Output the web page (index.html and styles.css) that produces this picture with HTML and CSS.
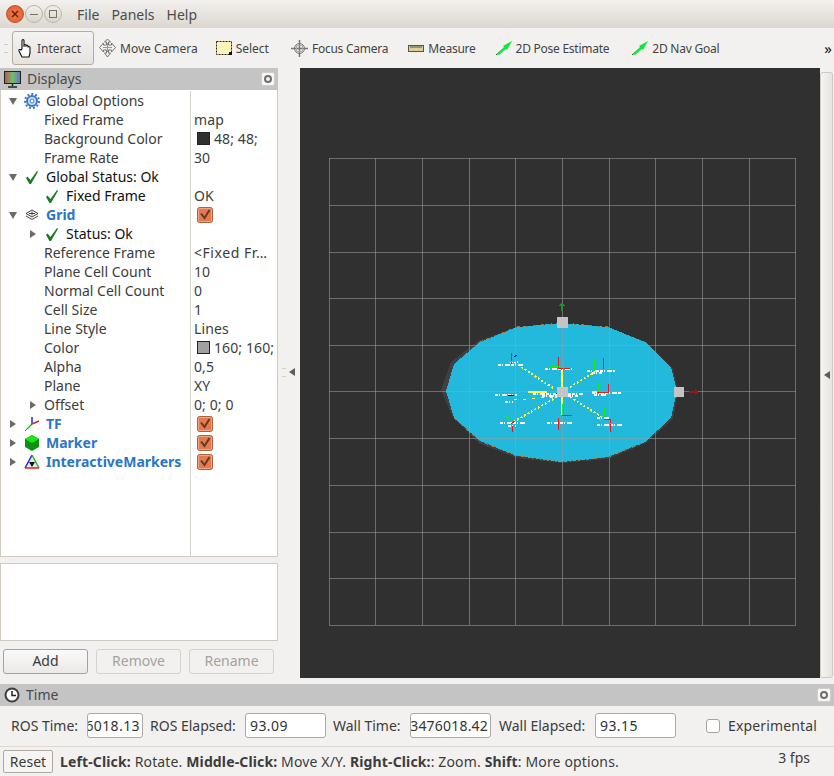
FILE: index.html

```html
<!DOCTYPE html>
<html lang="en">
<head>
    <meta charset="UTF-8">
    <title>RViz</title>
    <link rel="stylesheet" href="styles.css">
</head>
<body>
    <svg class="sprite" width="0" height="0">
        <symbol id="check" viewBox="0 0 16 16">
            <path d="M2 9l1.500-1.500 3 3.500 6.500-9 1 .8-7 12.200h-1.500z" fill="#1b7a24"/>
        </symbol>
        <symbol id="box" viewBox="0 0 16 16">
            <rect x="0.500" y="0.500" width="15" height="15" rx="2" fill="#e67a4e" stroke="#a9623f"/>
            <rect x="1.500" y="1.500" width="13" height="13" rx="1" fill="none" stroke="#f2a484"/>
            <path d="M4 6.500l3.500 4.500 5-8" fill="none" stroke="#5e3a2c" stroke-width="2"/>
        </symbol>
        <symbol id="arrowdown" viewBox="0 0 10 10">
            <path d="M1 2h8l-4 7z" fill="#6b6b6b"/>
        </symbol>
        <symbol id="arrowright" viewBox="0 0 10 10">
            <path d="M2 1v8l6-4z" fill="#6b6b6b"/>
        </symbol>
        <symbol id="pose" viewBox="0 0 16 16">
            <path d="M0 15L12 5" stroke="#0a5a0a" stroke-width="1"/>
            <path d="M1 14l7-7-1-1 9-5-5 9-1-1-7 6z" fill="#10e840"/>
        </symbol>
        <symbol id="float" viewBox="0 0 14 14">
            <rect x="0.500" y="0.500" width="13" height="13" rx="2" fill="#f7f6f4" stroke="#d0ccc6"/>
            <circle cx="7" cy="7" r="3" fill="none" stroke="#6e6e6e" stroke-width="2"/>
        </symbol>
    </svg>

    <div class="titlebar">
        <div class="winbtn close"><svg width="8" height="8" viewBox="0 0 8 8"><path d="M1 1l6 6M7 1l-6 6" stroke="#5c2410" stroke-width="1.500"/></svg></div>
        <div class="winbtn"><span class="min-mark"></span></div>
        <div class="winbtn"><span class="max-mark"></span></div>
        <div class="menu">
            <span>File</span>
            <span>Panels</span>
            <span>Help</span>
        </div>
    </div>

    <div class="toolbar">
        <div class="grip"></div>
        <div class="tool active">
            <svg width="18" height="20" viewBox="0 0 18 20"><path d="M5 11V2.500a1 1 0 0 1 2 0V9V7.500a1 1 0 0 1 2 0V9V8a1 1 0 0 1 2 0v1.500a1 1 0 0 1 2 0V15l-1 4H5l-3-6c-.6-1.500 1-2 2-1z" fill="#fff" stroke="#111" stroke-width="1.100"/></svg>
            <span>Interact</span>
        </div>
        <div class="tool move">
            <svg width="17" height="18" viewBox="0 0 17 18"><path d="M8.500 0l3 3h-2v3h3V4l4 4.500-4 4.500v-2h-3v3h2l-3 4-3-4h2v-3h-3v2L.5 8.500l4-4.500v2h3V3h-2z" fill="#eee" stroke="#777"/><path d="M4 8.500h9M8.500 4v9" stroke="#999"/></svg>
            <span>Move Camera</span>
        </div>
        <div class="tool select">
            <svg width="16" height="14" viewBox="0 0 16 14"><rect x="0.500" y="0.500" width="15" height="13" fill="#fbf6b8" stroke="#222" stroke-dasharray="2 1"/><rect x="13" y="11" width="3" height="3" fill="#111"/></svg>
            <span>Select</span>
        </div>
        <div class="tool focus tight">
            <svg width="17" height="17" viewBox="0 0 17 17"><circle cx="8.500" cy="8.500" r="5" fill="#eee" stroke="#777"/><path d="M8.500 0v17M0 8.500h17" stroke="#777" stroke-width="1.500"/><path d="M5.500 5.500h6v6h-6z" fill="none" stroke="#aaa"/></svg>
            <span>Focus Camera</span>
        </div>
        <div class="tool measure tight">
            <svg width="16" height="7" viewBox="0 0 16 7"><rect x="0.500" y="0.500" width="15" height="6" fill="#dccf98" stroke="#555"/><path d="M3 1v2M5 1v2M7 1v2M9 1v2M11 1v2M13 1v2" stroke="#555"/></svg>
            <span>Measure</span>
        </div>
        <div class="tool pose tight">
            <svg width="16" height="16"><use href="#pose"/></svg>
            <span>2D Pose Estimate</span>
        </div>
        <div class="tool nav tight">
            <svg width="16" height="16"><use href="#pose"/></svg>
            <span>2D Nav Goal</span>
        </div>
        <div class="more">»</div>
    </div>

    <div class="main">
        <div class="leftside">
            <div class="dockhead">
                <svg class="dockicon" width="17" height="17" viewBox="0 0 17 17">
                    <defs><linearGradient id="screen"><stop offset="0" stop-color="#c0504d"/><stop offset="0.500" stop-color="#6fbf6a"/><stop offset="1" stop-color="#6a6fc8"/></linearGradient></defs>
                    <rect x="0.500" y="0.500" width="16" height="12" fill="url(#screen)" stroke="#222"/>
                    <path d="M8.500 13v2M4 16h9" stroke="#222" stroke-width="1.500"/>
                </svg>
                <span class="docktitle">Displays</span>
                <svg class="floatbtn" width="14" height="14"><use href="#float"/></svg>
            </div>

            <div class="tree">
                <div class="row"><div class="name lvl0"><svg class="arrow" width="10" height="10"><use href="#arrowdown"/></svg>
                    <svg class="ico" width="16" height="16" viewBox="0 0 16 16"><circle cx="8" cy="8" r="5" fill="#cfe0f6" stroke="#3b78c9" stroke-width="2"/><circle cx="8" cy="8" r="7" fill="none" stroke="#3b78c9" stroke-width="2" stroke-dasharray="2 2"/><circle cx="8" cy="8" r="2" fill="#fff" stroke="#3b78c9"/></svg>
                    <span>Global Options</span></div><div class="val"></div></div>
                <div class="row"><div class="name plain">Fixed Frame</div><div class="val">map</div></div>
                <div class="row"><div class="name plain">Background Color</div><div class="val"><span class="swatch dark"></span>48; 48;</div></div>
                <div class="row"><div class="name plain">Frame Rate</div><div class="val">30</div></div>
                <div class="row"><div class="name lvl0"><svg class="arrow" width="10" height="10"><use href="#arrowdown"/></svg>
                    <svg class="ico" width="16" height="16"><use href="#check"/></svg>
                    <span class="black">Global Status: Ok</span></div><div class="val"></div></div>
                <div class="row"><div class="name lvl1"><svg class="ico" width="16" height="16"><use href="#check"/></svg>
                    <span class="black">Fixed Frame</span></div><div class="val">OK</div></div>
                <div class="row"><div class="name lvl0"><svg class="arrow" width="10" height="10"><use href="#arrowdown"/></svg>
                    <svg class="ico" width="16" height="16" viewBox="0 0 16 16"><path d="M8 3l6 3.500-6 3.500-6-3.500zM2 9l6 3.500L14 9M5 6.500l6 0M8 4.500v4" fill="none" stroke="#444"/></svg>
                    <span class="blue">Grid</span></div><div class="val"><svg class="cbox" width="16" height="16"><use href="#box"/></svg></div></div>
                <div class="row"><div class="name lvl1"><svg class="arrow sub" width="10" height="10"><use href="#arrowright"/></svg>
                    <svg class="ico" width="16" height="16"><use href="#check"/></svg>
                    <span class="black">Status: Ok</span></div><div class="val"></div></div>
                <div class="row"><div class="name plain">Reference Frame</div><div class="val longval">&lt;Fixed Fr…</div></div>
                <div class="row"><div class="name plain">Plane Cell Count</div><div class="val">10</div></div>
                <div class="row"><div class="name plain">Normal Cell Count</div><div class="val">0</div></div>
                <div class="row"><div class="name plain">Cell Size</div><div class="val">1</div></div>
                <div class="row"><div class="name plain">Line Style</div><div class="val">Lines</div></div>
                <div class="row"><div class="name plain">Color</div><div class="val"><span class="swatch gray"></span>160; 160;</div></div>
                <div class="row"><div class="name plain">Alpha</div><div class="val">0,5</div></div>
                <div class="row"><div class="name plain">Plane</div><div class="val">XY</div></div>
                <div class="row"><div class="name plain offset"><svg class="arrow" width="10" height="10"><use href="#arrowright"/></svg><span>Offset</span></div><div class="val">0; 0; 0</div></div>
                <div class="row"><div class="name lvl0"><svg class="arrow" width="10" height="10"><use href="#arrowright"/></svg>
                    <svg class="ico" width="16" height="16" viewBox="0 0 16 16"><path d="M8 8V1" stroke="#2222dd" stroke-width="1.500"/><path d="M8 8l7-3" stroke="#dd2222" stroke-width="1.500"/><path d="M8 8l-5 5" stroke="#22cc22" stroke-width="1.500"/><path d="M1 15l7-7" stroke="#dd2222" stroke-width="1" stroke-dasharray="3 5"/></svg>
                    <span class="blue">TF</span></div><div class="val"><svg class="cbox" width="16" height="16"><use href="#box"/></svg></div></div>
                <div class="row"><div class="name lvl0"><svg class="arrow" width="10" height="10"><use href="#arrowright"/></svg>
                    <svg class="ico" width="16" height="16" viewBox="0 0 16 16"><path d="M8 0l7 4v8l-7 4-7-4V4z" fill="#0f8f0f"/><path d="M8 0l7 4-7 4-7-4z" fill="#19e619"/></svg>
                    <span class="blue">Marker</span></div><div class="val"><svg class="cbox" width="16" height="16"><use href="#box"/></svg></div></div>
                <div class="row"><div class="name lvl0"><svg class="arrow" width="10" height="10"><use href="#arrowright"/></svg>
                    <svg class="ico" width="16" height="16" viewBox="0 0 16 16"><path d="M8 1l7 13H1z" fill="#e8e8e8"/><path d="M8 1L1 14" stroke="#2222dd" stroke-width="1.500"/><path d="M8 1l7 13" stroke="#22bb22" stroke-width="1.500"/><path d="M1 14h14" stroke="#dd2222" stroke-width="1.500"/><path d="M5 8h6l-3 5z" fill="#111"/></svg>
                    <span class="blue">InteractiveMarkers</span></div><div class="val"><svg class="cbox" width="16" height="16"><use href="#box"/></svg></div></div>
                <div class="rest"></div>
            </div>

            <div class="desc"></div>

            <div class="btnrow">
                <div class="btn">Add</div>
                <div class="btn off">Remove</div>
                <div class="btn off">Rename</div>
            </div>
        </div>

        <div class="split">
            <span class="splitgrip"></span>
            <span class="splitarrow"></span>
        </div>

        <div class="view">
            <svg class="scene" width="520" height="610" viewBox="300 68 520 610">
                <rect x="300" y="68" width="520" height="610" fill="#303030"/>
                <!-- shadow of the disc -->
                <path d="M441 390l10-28 27-21 39-14 45-4 46 4 38 15 27 27 5 22-5 28-27 24-38 16-46 4-45-5-39-15-26-27z" fill="#404040"/>
                <path d="M446 391l8-27 26-22 37-15 45-4 46 4 37 15 26 25 6 24-6 27-26 24-37 15-46 5-45-6-37-15-26-23z" fill="#22b9dc"/>
                <path d="M454 418l26 23 37 15 45 6 46-5 37-15M480 342l37-15 45-4 46 4" fill="none" stroke="#9a7a2c" stroke-width="1" stroke-dasharray="3 5"/>
                <g class="gridlines">
                    <path d="M329.500 158v467M375.500 158v467M422.500 158v467M469.500 158v467M515.500 158v467M562.500 158v467M609.500 158v467M655.500 158v467M702.500 158v467M749.500 158v467M795.500 158v467"/>
                    <path d="M329 158.500h467M329 205.500h467M329 252.500h467M329 298.500h467M329 345.500h467M329 391.500h467M329 438.500h467M329 485.500h467M329 532.500h467M329 578.500h467M329 625.500h467"/>
                </g>
                <!-- dashed links -->
                <g class="links">
                    <path d="M553 388L515 363"/>
                    <path d="M570 387L595 372"/>
                    <path d="M557 397L513 422"/>
                    <path d="M570 397L602 417"/>
                </g>
                <path class="sparse" d="M553 397L513 400"/>
                <path d="M562 370v17M562 397v18" stroke="#ffff40" stroke-width="2"/>
                <path d="M528 392h19M592 392h5" stroke="#ffff40" stroke-width="2"/>
                <!-- white scans -->
                <g class="scans">
                    <path d="M533 394h50"/>
                    <path d="M542 396h36"/>
                    <path d="M498 365h25M510 362h8M545 369h27M587 371h28M592 373h10"/>
                    <path d="M495 395h22M505 402h8M592 393h30M594 395h12"/>
                    <path d="M500 423h25M508 426h8M547 423h25M597 425h25M597 418h12"/>
                </g>
                <!-- frames -->
                <path d="M558 357v11M511 353v11M603 358v11M608 384v9M558 418v12M512 426v6M610 420v12M558 368h12M597 392h11M562 415h10M604 419h7M511 424l4-3" stroke="#ff1010" stroke-width="1" fill="none"/>
                <path d="M563 359v10M594 360v11M598 383v9M562 404v11M507 361h10M550 366h9M595 367h7M510 421l-4-5M569 421h-8M604 423h7M604 408v9" stroke="#10f010" stroke-width="1" fill="none"/>
                <path d="M514 357l3-2M508 395h6M556 393h3M562 391h2" stroke="#1010ee" stroke-width="1" fill="none"/>
                <!-- controls -->
                <rect x="557" y="317" width="11" height="11" fill="#c4c4c4"/>
                <rect x="674" y="387" width="10" height="10" fill="#c4c4c4"/>
                <rect x="557" y="387" width="11" height="10" fill="#c4c4c4"/>
                <path d="M562 302l-3 4h2v5h2v-5h2z" fill="#1f8f3a"/>
                <path d="M699 392l-4-3v2h-6v2h6v2z" fill="#a01414"/>
            </svg>
        </div>

        <div class="rightside">
            <span class="splitarrow"></span>
        </div>
    </div>

    <div class="dockhead timehead">
        <svg class="dockicon" width="16" height="16" viewBox="0 0 16 16"><circle cx="8" cy="8" r="6.500" fill="#fafafa" stroke="#3d3d3d" stroke-width="2"/><path d="M8 4v4.500h4" fill="none" stroke="#222" stroke-width="1.500"/></svg>
        <span class="docktitle">Time</span>
        <svg class="floatbtn" width="14" height="14"><use href="#float"/></svg>
    </div>

    <div class="timerow">
        <span class="tlabel t1">ROS Time:</span>
        <div class="field f1"><span>3476018.13</span></div>
        <span class="tlabel t2">ROS Elapsed:</span>
        <div class="field wide"><span>93.09</span></div>
        <span class="tlabel t3">Wall Time:</span>
        <div class="field wide clip"><span>3476018.42</span></div>
        <span class="tlabel t4">Wall Elapsed:</span>
        <div class="field wide"><span>93.15</span></div>
        <span class="plaincheck"></span>
        <span class="tlabel exp">Experimental</span>
    </div>

    <div class="statusbar">
        <div class="reset">Reset</div>
        <div class="hint"><b>Left-Click:</b> Rotate. <b>Middle-Click:</b> Move X/Y. <b>Right-Click:</b>: Zoom. <b>Shift</b>: More options.</div>
        <div class="fps">3 fps</div>
    </div>
</body>
</html>
```

FILE: styles.css

```css
* { box-sizing: border-box; }
html, body { margin: 0; padding: 0; }
body { width: 834px; height: 776px; overflow: hidden; display: flex; flex-direction: column; background-color: #f2f1ef; color: #3c3c3c; font-family: "Noto Sans", sans-serif; font-size: 14px; line-height: 19px; }
.sprite { position: absolute; }
svg { display: block; flex: none; }

.titlebar { height: 28px; flex: none; display: flex; align-items: center; padding-left: 6px; gap: 1px; background: linear-gradient(#f3f1ee, #dcd7d0); border-radius: 6px 6px 0 0; }
.winbtn { width: 18px; height: 18px; border-radius: 50%; display: flex; align-items: center; justify-content: center; border: 1px solid #b9b4ad; background: linear-gradient(#f1efeb, #d9d5ce); }
.close { border-color: #b4532c; background: radial-gradient(#f37b4d, #e2582a); }
.min-mark { width: 8px; height: 1px; background-color: #77736c; }
.max-mark { width: 8px; height: 8px; border: 1px solid #77736c; }
.menu { display: flex; gap: 12px; margin-left: 14px; font-size: 14px; color: #4c4c4c; }

.toolbar { height: 40px; flex: none; display: flex; align-items: center; padding-left: 4px; font-size: 12px; color: #444; }
.grip { width: 4px; height: 9px; margin-right: 4px; border-top: 1px solid #ccc; border-bottom: 1px solid #ccc; }
.tool { display: flex; align-items: center; gap: 4px; }
.tight { letter-spacing: -0.25px; }
.tool.active { width: 82px; height: 34px; padding-left: 4px; gap: 2px; border: 1px solid #b3aca3; border-radius: 3px; background: linear-gradient(#f4f3f1, #e6e3df); }
.move { margin-left: 5px; }
.select { margin-left: 18px; }
.focus { margin-left: 22px; }
.measure { margin-left: 20px; }
.pose { margin-left: 20px; }
.nav { margin-left: 23px; }
.more { margin-left: auto; margin-right: 2px; font-size: 15px; color: #111; }

.main { height: 616px; flex: none; display: flex; }
.leftside { width: 278px; flex: none; display: flex; flex-direction: column; }
.dockhead { height: 22px; flex: none; display: flex; align-items: center; background-color: #c4c4c4; padding: 0 3px 0 4px; }
.dockicon { margin-right: 6px; }
.docktitle { flex: 1; color: #4a4a4a; padding-bottom: 2px; }
.floatbtn { margin-top: -1px; }

.tree { height: 467px; flex: none; background-color: #fff; border: 1px solid #cfc9c1; border-top: none; display: flex; flex-direction: column; padding-top: 1px; }
.row { height: 19px; flex: none; display: flex; }
.name { width: 190px; flex: none; display: flex; align-items: center; border-right: 1px solid #d6d2cc; white-space: nowrap; }
.plain { padding-left: 43px; }
.lvl0 { padding-left: 7px; }
.lvl1 { padding-left: 43px; }
.offset { padding-left: 27px; gap: 6px; }
.arrow { margin-right: 6px; }
.offset .arrow { margin-right: 0; }
.arrow.sub { margin-left: -16px; }
.ico { margin-right: 6px; }
.black { color: #111; }
.blue { color: #2a76c6; font-weight: 700; }
.val { flex: 1; display: flex; align-items: center; padding-left: 3px; white-space: nowrap; overflow: hidden; letter-spacing: 0.1px; }
.longval { letter-spacing: 0.55px; }
.cbox { margin-left: 3px; }
.swatch { width: 13px; height: 13px; margin: 0 4px 0 3px; border: 1px solid #222; }
.dark { background-color: #303030; }
.gray { background-color: #a0a0a0; }
.rest { flex: 1; width: 190px; border-right: 1px solid #d6d2cc; }

.desc { height: 78px; flex: none; margin-top: 6px; background-color: #fff; border: 1px solid #cfc9c1; }
.btnrow { display: flex; gap: 8px; padding: 8px 3px 0; }
.btn { width: 85px; height: 25px; padding-bottom: 2px; display: flex; align-items: center; justify-content: center; border: 1px solid #a9a298; border-radius: 3px; background: linear-gradient(#fbfafa, #ebe9e5); }
.off { border-color: #d5d1cb; background: #f2f1ef; color: #a5a29d; }

.split { width: 22px; flex: none; display: flex; align-items: center; justify-content: flex-end; gap: 3px; padding-right: 5px; padding-bottom: 8px; }
.splitgrip { width: 4px; height: 9px; border-top: 1px solid #d5d1cb; border-bottom: 1px solid #d5d1cb; }
.splitarrow { width: 0; height: 0; border-top: 4px solid transparent; border-bottom: 4px solid transparent; border-right: 6px solid #5d5d5d; }

.view { width: 520px; height: 610px; flex: none; }
.scene { shape-rendering: crispEdges; }
.gridlines path { stroke: #a0a0a0; stroke-opacity: 0.55; stroke-width: 1; fill: none; }
.links path { stroke: #ffff50; stroke-width: 2; stroke-dasharray: 2 2; fill: none; }
.sparse { stroke: #ffff50; stroke-width: 1; stroke-dasharray: 3 6; fill: none; }
.scans path { stroke: #fff; stroke-width: 2; stroke-dasharray: 3 1 1 2 5 1; fill: none; }

.rightside { width: 13px; height: 606px; margin-top: 4px; flex: none; display: flex; align-items: center; justify-content: center; border: 1px solid #cfc9c1; border-radius: 3px; background: linear-gradient(to right, #f6f5f3, #e7e4e0); }

.timehead { padding-left: 4px; }
.timerow { height: 41px; flex: none; display: flex; align-items: center; padding: 0 0 1px 0; border-bottom: 1px solid #dcd8d2; }
.tlabel { white-space: nowrap; }
.t1 { width: 87px; padding-left: 11px; }
.t2 { width: 95px; margin-left: 7px; }
.t3 { width: 77px; margin-left: 7px; }
.t4 { width: 96px; margin-left: 8px; }
.exp { letter-spacing: 0.15px; }
.field { height: 25px; display: flex; align-items: center; justify-content: flex-start; padding: 0 4px; overflow: hidden; background-color: #fff; border: 1px solid #b0a99f; border-radius: 3px; color: #333; white-space: nowrap; letter-spacing: 0.4px; }
.f1 { width: 56px; justify-content: flex-end; padding: 0 2px; }
.wide { width: 81px; }
.clip { justify-content: flex-end; padding: 0 2px; letter-spacing: 0.2px; }
.plaincheck { width: 14px; height: 14px; margin: 0 8px 0 30px; border: 1px solid #a9a298; border-radius: 3px; background-color: #fff; }

.statusbar { height: 29px; flex: none; display: flex; align-items: center; padding: 0 0 0 3px; }
.reset { width: 50px; height: 23px; display: flex; align-items: center; justify-content: center; border: 1px solid #b0a99f; border-radius: 2px; background-color: #f6f5f3; }
.hint { margin-left: 7px; white-space: nowrap; flex: 1; letter-spacing: 0.14px; }
.fps { margin-right: 24px; margin-top: -8px; }
```
